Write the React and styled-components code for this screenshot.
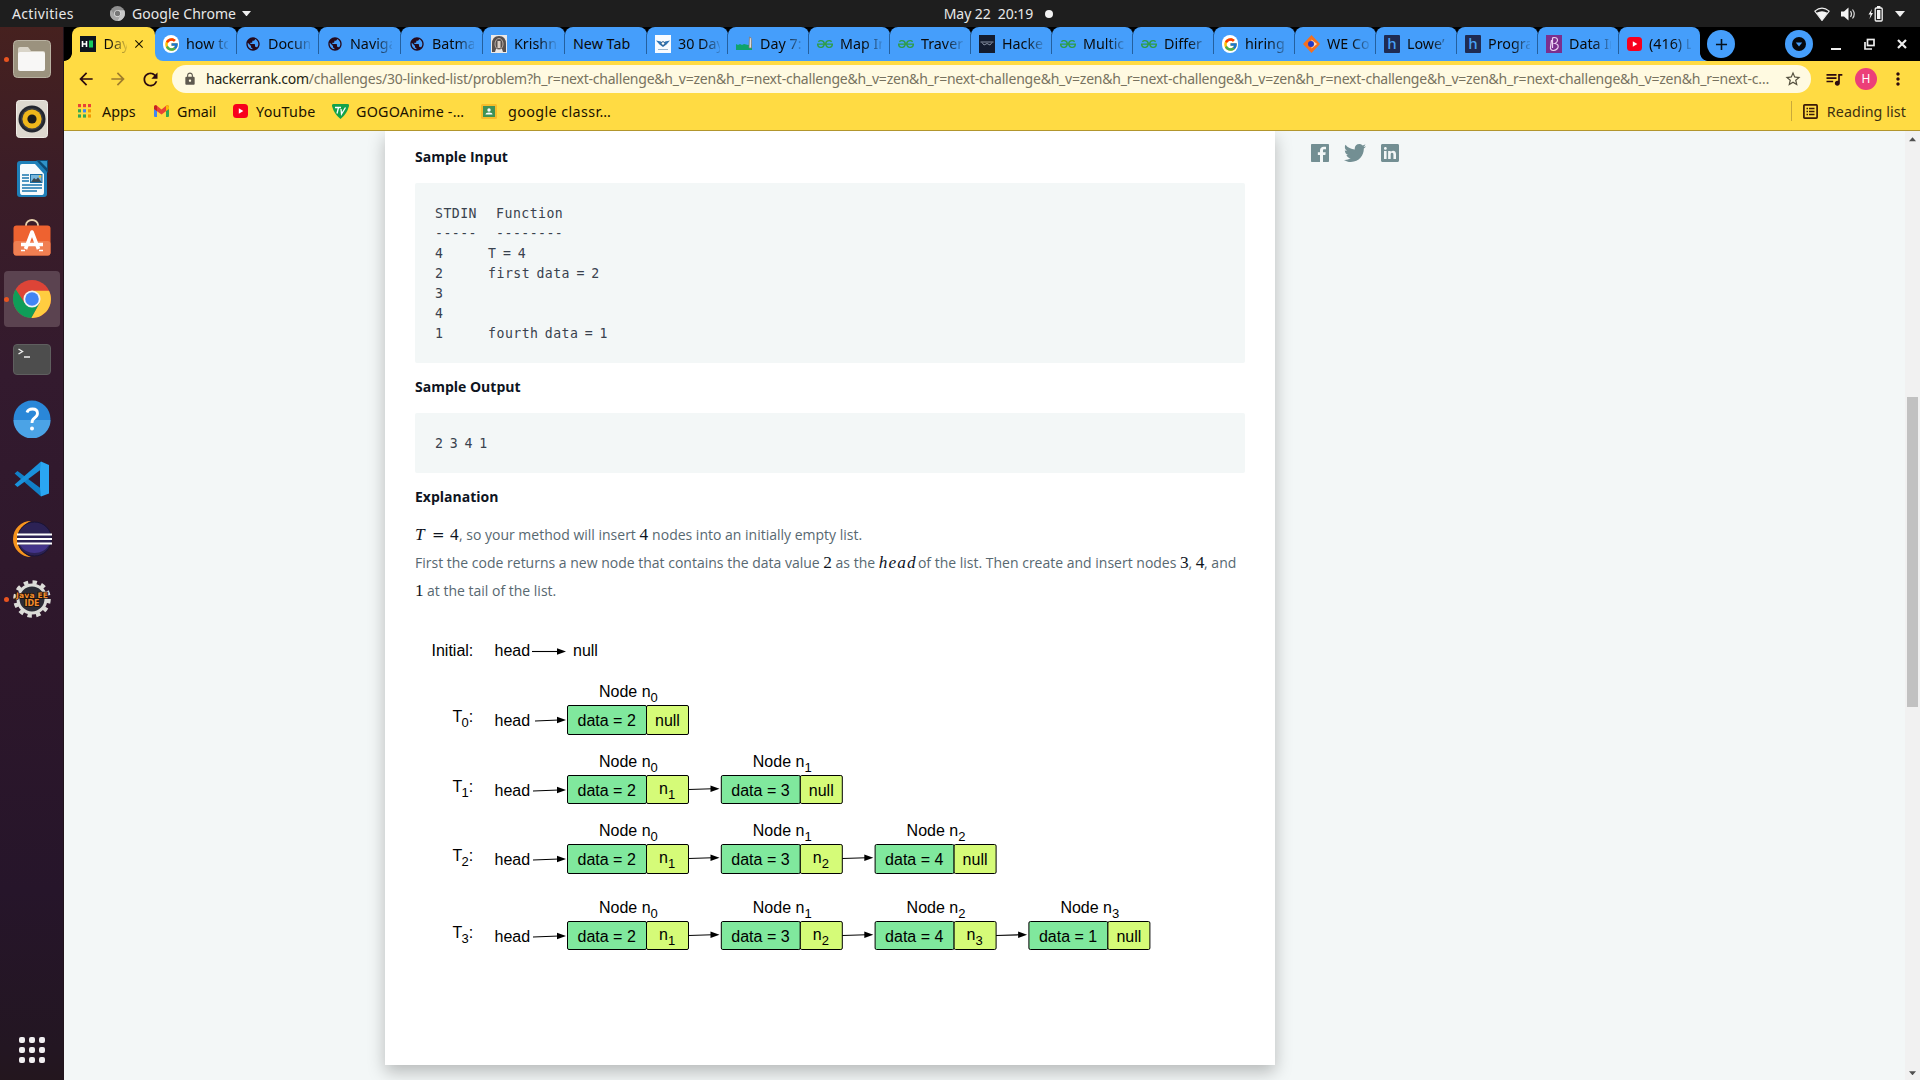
import React from "react";
import styled, { createGlobalStyle } from "styled-components";
import { FcGoogle } from "react-icons/fc";
import { SiGeeksforgeeks } from "react-icons/si";
import { IoLogoFacebook, IoLogoTwitter, IoLogoLinkedin } from "react-icons/io";
import {
  MdPublic, MdLock, MdArrowBack, MdArrowForward, MdRefresh, MdStarBorder,
  MdQueueMusic, MdMoreVert, MdClose, MdAdd,
} from "react-icons/md";

const ui = `"Noto Sans", "Open Sans", sans-serif`;

const Global = createGlobalStyle`
  * { box-sizing: border-box; }
  body { margin: 0; background: #f3f7f7; overflow: hidden; font-family: ${ui}; }
  svg { display: block; flex: none; }
`;

const Screen = styled.div`
  width: 1920px; height: 1080px; display: flex; flex-direction: column; overflow: hidden;
`;

/* ---------- desktop top bar ---------- */
const TopBar = styled.header`
  height: 27px; flex: none; background: #1e1e1e; color: #e8e8e8;
  display: grid; grid-template-columns: 1fr auto 1fr; align-items: center;
  font-size: 14px;
`;
const TopLeft = styled.div`display: flex; align-items: center; padding-left: 12px;`;
const Activities = styled.span`width: 98px; letter-spacing: 0.35px;`;
const AppName = styled.span`margin-left: 7px; margin-right: 6px; letter-spacing: 0.05px;`;
const Clock = styled.div`
  display: flex; align-items: center; gap: 12px; padding-left: 77px; white-space: pre; letter-spacing: -0.07px;
`;
const Dot = styled.i`width: 8px; height: 8px; border-radius: 50%; background: #f2f2f2;`;
const TopRight = styled.div`display: flex; justify-content: flex-end; align-items: center; gap: 11px; padding-right: 15px;`;

/* ---------- dock ---------- */
const Body = styled.div`flex: 1; display: flex; min-height: 0;`;
const Dock = styled.nav`
  width: 64px; flex: none; padding-top: 2px; display: flex; flex-direction: column;
  background: linear-gradient(#46211f 0%, #3b1d27 14%, #331a2e 33%, #2d172b 60%, #26152a 82%, #231622 97%, #23161e 100%);
  border-right: 1px solid #21141c;
`;
const DockItem = styled.div`
  height: 60px; display: grid; grid-template-columns: 4px 56px 3px; align-items: center;
`;
const Running = styled.i`
  width: 5px; height: 5px; margin-left: 4px; border-radius: 50%; z-index: 1;
  background: ${(p) => (p.$on ? "#e95420" : "transparent")};
`;
const Tile = styled.div`
  width: 56px; height: 56px; border-radius: 4px; display: flex; align-items: center; justify-content: center;
  background: ${(p) => (p.$active ? "#5b4350" : "transparent")};
`;
const DockSpacer = styled.div`flex: 1;`;
const AppGrid = styled.div`
  display: grid; grid-template-columns: repeat(3, 6px); gap: 4px; padding: 0 0 17px 19px;
`;
const GridDot = styled.i`height: 6px; border-radius: 2px; background: #f0eef0;`;

/* ---------- browser chrome ---------- */
const Browser = styled.main`flex: 1; display: flex; flex-direction: column; min-width: 0;`;
const TabStrip = styled.div`height: 34px; background: #000; display: flex; flex: none; color: #0a0a0a;`;
const Flare = styled.i`
  width: 8px; align-self: flex-end; height: 8px; flex: none;
  background: radial-gradient(circle at ${(p) => (p.$right ? "100%" : "0")} 0, transparent 7.5px, ${(p) => p.$color} 8.2px);
`;
const ActiveTab = styled.div`
  width: 83px; height: 34px; background: #ffdb43; border-radius: 8px 8px 0 0; flex: none;
  display: flex; align-items: center; padding-left: 8px; font-size: 14.3px;
`;
const ActiveClose = styled.span`display: flex; margin-left: 5px;`;
const TabGroup = styled.div`
  width: 1545px; display: flex; flex: none;
  background: linear-gradient(#ffdb43, #ffdb43) 0 100% / 8px 8px no-repeat;
`;
const Tab = styled.div`
  width: ${(p) => p.$w}px; flex: none; background: #459efb; border-radius: 8px 8px ${(p) => (p.$first ? "0 8px" : "0 0")};
  display: flex; align-items: center; padding-left: 8px; font-size: 14.3px;
`;
const TabSeparator = styled.i`
  width: 1px; height: 20px; margin-left: auto; background: ${(p) => (p.$hide ? "transparent" : "#24609f")};
`;
const TabLabel = styled.span`
  width: ${(p) => p.$w}px; margin-left: ${(p) => p.$gap ?? 7}px; overflow: hidden; white-space: nowrap; line-height: 20px;
  mask-image: ${(p) => (p.$solid ? "none" : "linear-gradient(90deg, #000 calc(100% - 18px), rgba(0,0,0,.12))")};
`;
const RoundButton = styled.div`
  width: 28px; height: 28px; border-radius: 50%; background: #459efb; margin-top: 3px; margin-left: ${(p) => p.$ml}px;
  display: flex; align-items: center; justify-content: center; flex: none;
`;
const WindowButtons = styled.div`
  display: flex; align-items: center; margin-left: 18px; height: 34px; gap: 21.5px;
`;

const Toolbar = styled.div`
  height: 36px; flex: none; background: #ffdb43; display: flex; align-items: center; color: #2b0a10; padding-left: 12px;
`;
const NavIcon = styled.span`width: 32px; flex: none; display: flex; opacity: ${(p) => (p.$dim ? 0.45 : 1)};`;
const Omnibox = styled.div`
  width: 1639px; height: 28px; border-radius: 14px; background: #fffae1; flex: none; margin-right: 13px;
  display: flex; align-items: center; padding: 0 9px 0 11px; color: #77725f;
`;
const Url = styled.div`
  margin-left: 9px; flex: 1; white-space: nowrap; font-size: 14px; letter-spacing: -0.217px; line-height: 22px;
  b { font-weight: 400; color: #241f14; }
`;
const Avatar = styled.div`
  width: 22px; height: 22px; border-radius: 50%; background: #ec3f78; color: #fff; font: 12px/22px ${ui};
  text-align: center; margin: 0 11px; flex: none;
`;
const Bookmarks = styled.div`
  height: 34px; flex: none; background: #ffdb43; border-bottom: 1px solid #b2962d; color: #1b1200;
  display: flex; align-items: center; padding: 0 14px 5px; font-size: 14.3px;
`;
const Bookmark = styled.div`
  display: flex; align-items: center; width: ${(p) => p.$w}px; gap: ${(p) => p.$gap}px; white-space: nowrap;
  letter-spacing: ${(p) => p.$ls || 0}px;
`;
const ReadingList = styled.div`
  margin-left: auto; display: flex; align-items: center; gap: 9px; border-left: 1px solid #c9a93a;
  padding-left: 11px; height: 20px; white-space: nowrap; letter-spacing: 0.08px; color: #3c2f10;
`;

/* ---------- page ---------- */
const Viewport = styled.div`flex: 1; display: flex; min-height: 0; overflow: hidden; background: #f3f7f7;`;
const PageArea = styled.div`flex: 1; display: flex; padding-left: 321px; overflow: hidden;`;
const Card = styled.article`
  width: 890px; height: 934px; background: #fff; padding: 14px 30px 0; flex: none;
  box-shadow: 0 7px 16px rgba(0, 0, 0, 0.25);
  font-family: "Open Sans", sans-serif; color: #576871; font-size: 14px;
`;
const Heading = styled.h3`
  margin: 0; font-size: 14px; font-weight: 700; line-height: 24px; color: #0e141e;
`;
const Code = styled.pre`
  margin: 14px 0 12px; padding: 21px 20px 19px; background: #f3f7f7; border-radius: 2px; color: #39424e;
  font: 13.2px/20px "DejaVu Sans Mono", monospace; letter-spacing: 0.45px; word-spacing: -2px;
`;
const Text = styled.p`margin: 12px 0 0; line-height: 28px; white-space: nowrap;`;
const M = styled.span`
  display: inline-block; width: ${(p) => p.$w}px; line-height: 20px; color: #0e141e; white-space: pre;
  font-family: ${(p) => (p.$op ? '"DejaVu Serif"' : '"Liberation Serif"')}, serif; font-size: ${(p) => (p.$op ? 15 : 17.3)}px;
  font-style: ${(p) => (p.$i ? "italic" : "normal")}; letter-spacing: ${(p) => p.$ls || 0}px;
`;
const Diagram = styled.svg`margin-top: 25px;`;
const Share = styled.aside`display: flex; gap: 11px; padding: 10px 0 0 33px; color: #738f93;`;
const Scrollbar = styled.div`
  width: 15px; background: #f1f1f1; display: flex; flex-direction: column; align-items: center; padding: 6px 0 5px;
`;
const Thumb = styled.div`width: 11px; height: 310px; background: #c1c1c1; margin-top: 255px; margin-bottom: auto;`;

/* ---------- drawings ---------- */
const Chrome = ({ s = 38, mono }) => {
  const c = mono ? ["#8f8f8f", "#a8a8a8", "#c9c9c9", "#777", "#e6e6e6"] : ["#dd4437", "#0f9d58", "#ffcd40", "#4285f4", "#f4f4f4"];
  return (
    <svg width={s} height={s} viewBox="0 0 48 48">
      <circle cx="24" cy="24" r="24" fill={c[0]} />
      <path d="M24 13.5H45.5A24 24 0 0 1 23 48L33.5 29Z" fill={c[2]} />
      <path d="M3.4 11.6A24 24 0 0 0 23 48L33.4 29.4 14.7 29Z" fill={c[1]} />
      <circle cx="24" cy="24" r="10.8" fill={c[4]} />
      <circle cx="24" cy="24" r="8.6" fill={c[3]} />
    </svg>
  );
};
const Files = () => (
  <svg width="38" height="38" viewBox="0 0 38 38">
    <rect x=".5" y=".5" width="37" height="37" rx="4" fill="#9b927e" stroke="#b9b2a2" />
    <path d="M5 9a2 2 0 0 1 2-2h8l3 4h12a2 2 0 0 1 2 2v5H5Z" fill="#d9d4c8" />
    <rect x="5" y="12" width="27" height="19" rx="2" fill="#f8f7f6" />
  </svg>
);
const Rhythm = () => (
  <svg width="32" height="38" viewBox="0 0 32 38">
    <rect x=".5" y=".5" width="31" height="37" rx="3" fill="#ddd8cf" stroke="#efece6" />
    <circle cx="16" cy="19" r="13.5" fill="#23262f" />
    <circle cx="16" cy="19" r="11" fill="#3a3c42" />
    <circle cx="16" cy="19" r="9.6" fill="#f0b71b" />
    <circle cx="16" cy="19" r="4.6" fill="#1c1c1c" />
  </svg>
);
const Writer = () => (
  <svg width="32" height="38" viewBox="0 0 32 38">
    <rect x="1" y="1" width="30" height="36" rx="3" fill="#1e7fb8" />
    <path d="M4 6q0-2 2-2h13l9 10v18q0 3-2 3H6q-2 0-2-3Z" fill="#f7fafc" />
    <path d="M20 0h12v13Z" fill="#0d4a73" /><path d="M24 1h7v7Z" fill="#2f93c9" />
    <path d="M6 15h7M6 18h7M6 21h7M6 25h20M6 28h20M6 31h15" stroke="#1a75ad" strokeWidth="1.4" />
    <rect x="14.5" y="14.5" width="11.5" height="8" fill="#79b7dd" stroke="#1a6da3" />
    <path d="M15 22l3-4 2 1.5 2-2 3.5 4.5Z" fill="#3c4a52" /><circle cx="24" cy="16.5" r="1.2" fill="#f5c12e" />
  </svg>
);
const Software = () => (
  <svg width="38" height="40" viewBox="0 0 38 40">
    <path d="M13 8V6a6 5 0 0 1 12 0v2" fill="none" stroke="#e9d3ad" strokeWidth="1.8" />
    <rect x=".5" y="6.5" width="37" height="30" rx="3" fill="#ee6230" />
    <rect x=".5" y="22" width="37" height="14.5" rx="3" fill="#f07f52" />
    <path d="M12.5 30L19 13l6.5 17M8 25.5h22" fill="none" stroke="#fff" strokeWidth="3.6" strokeLinejoin="round" />
    <path d="M8 31.5h4M26 31.5h4" stroke="#fff" strokeWidth="1.4" />
  </svg>
);
const Terminal = () => (
  <svg width="38" height="31" viewBox="0 0 38 31">
    <rect x=".5" y=".5" width="37" height="30" rx="3.5" fill="#4d4d4d" stroke="#5f5f5f" />
    <path d="M5.5 5l4 2.500-4 2.500M11 13h6" fill="none" stroke="#eee" strokeWidth="1.4" />
  </svg>
);
const Help = () => (
  <svg width="38" height="38" viewBox="0 0 38 38">
    <circle cx="19" cy="19" r="18.5" fill="#2a87d8" />
    <path d="M.5 20h37a18.500 18.500 0 0 1-37 0Z" fill="#4ba3e6" />
    <path d="M14 12.500q1-3.500 5.500-3.500 5 0 5 4.300 0 2.700-3 4.700-2.500 1.700-2.500 5" fill="none" stroke="#fff" strokeWidth="2.8" />
    <circle cx="19" cy="28.5" r="2" fill="#fff" />
  </svg>
);
const VSCode = () => (
  <svg width="36" height="36" viewBox="0 0 36 36">
    <path d="M.6 12.500L3.500 10 27 27.500V35.500Z" fill="#1180c8" />
    <path d="M.6 23.500L3.500 26 27 8.500V.5Z" fill="#1a92dc" />
    <path d="M26 9v18l1 8.500 8-3V4L27 .5Z" fill="#2aa6f2" />
  </svg>
);
const Eclipse = () => (
  <svg width="42" height="38" viewBox="0 0 42 38">
    <path d="M20 1A18 18 0 0 0 20 37Q6 31 7 19 7 7 20 1Z" fill="#f7941e" />
    <circle cx="23.5" cy="19" r="17" fill="#2c2255" stroke="#191436" />
    <path d="M9 25h29q-5 8-14.500 8T9 25Z" fill="#43348a" />
    <path d="M6 14.500h35M6 19h35M6 23.500h35" stroke="#fff" strokeWidth="2.2" />
  </svg>
);
const JavaEE = () => (
  <svg width="40" height="40" viewBox="0 0 40 40">
    <circle cx="20" cy="20" r="16.8" fill="none" stroke="#dcdcd8" strokeWidth="4" strokeDasharray="4.4 4.4" />
    <circle cx="20" cy="20" r="14" fill="#2b2b35" stroke="#dcdcd8" strokeWidth="3" />
    <g fill="#f08b2c" stroke="#1c120c" strokeWidth="1.6" paintOrder="stroke" fontFamily="DejaVu Sans" fontWeight="700" textAnchor="middle">
      <text x="20" y="18.5" fontSize="7.6" textLength="32">Java EE</text>
      <text x="20" y="27" fontSize="8">IDE</text>
    </g>
  </svg>
);
const HrIcon = () => (
  <svg width="16" height="16" viewBox="0 0 16 16">
    <rect width="16" height="16" fill="#0e141e" />
    <path d="M2.500 5v6M6.500 5v6M2.500 8h4" stroke="#fff" strokeWidth="1.6" fill="none" /><rect x="9" y="4.5" width="4" height="7" fill="#1bc95c" />
  </svg>
);
const GIcon = styled.span`
  width: 16px; height: 18px; border-radius: 8px; background: #fff; display: flex; align-items: center; justify-content: center; flex: none;
`;
const G = () => <GIcon><FcGoogle size={15} /></GIcon>;
const Globe = () => <MdPublic size={16} color="#250a1c" />;
const Gfg = () => <SiGeeksforgeeks size={16} color="#2f9d46" />;
const Temple = () => (
  <svg width="16" height="18" viewBox="0 0 16 18">
    <rect width="16" height="18" fill="#ece9e6" />
    <path d="M1 17V9q0-8 7-8t7 8v8h-3l-1-3H5l-1 3Z" fill="#57504e" />
    <ellipse cx="8" cy="9" rx="4" ry="5.5" fill="none" stroke="#b8aca4" /><rect x="6.5" y="6" width="3" height="7" fill="#d8cdc4" />
  </svg>
);
const Wings = () => (
  <svg width="16" height="18" viewBox="0 0 16 18">
    <rect width="16" height="18" fill="#f8fbff" /><path d="M1 5.500l5 1 1 3h2l1-3 5-1-3.500 4L8 12 4.500 9.500Z" fill="#2f74b5" />
    <circle cx="8" cy="8.5" r="1.8" fill="#fff" stroke="#2b5d8c" /><path d="M3 14.500h10" stroke="#9ab6cf" />
  </svg>
);
const Train = () => (
  <svg width="17" height="16" viewBox="0 0 17 16">
    <path d="M0 8l2 1 2-1 2 1 2-1 4 1 4-1v6H0Z" fill="#0fa36b" /><path d="M13.500 1q2 0 2 3v8h-2.500Z" fill="#e4dcd6" stroke="#7c7471" strokeWidth=".7" />
  </svg>
);
const Dark = () => (
  <svg width="16" height="18" viewBox="0 0 16 18">
    <rect width="16" height="18" fill="#141c2e" /><path d="M1.500 7h13M3 7.500l2 2.500 3-1.500L11 10l2-2.500" stroke="#8790a2" strokeWidth="1" fill="none" />
  </svg>
);
const Diamond = () => (
  <svg width="17" height="18" viewBox="0 0 17 18">
    <path d="M8.500 0L17 9l-8.500 9L0 9Z" fill="#f4701f" /><path d="M8.500 4.500L14 9l-5.500 4.500Z" fill="#ffd9b8" /><circle cx="8" cy="9" r="3" fill="#2338c8" />
  </svg>
);
const Letter = styled.span`
  width: 16px; height: 18px; flex: none; background: ${(p) => p.$bg}; color: ${(p) => p.$fg}; font: ${(p) => p.$font};
  text-align: center; border-radius: 1px;
`;
const H = () => <Letter $bg="#1f2b52" $fg="#49a2f5" $font='500 15px/17px "Noto Sans", sans-serif'>h</Letter>;
const BetaIcon = () => (
  <svg width="16" height="18" viewBox="0 0 16 18">
    <rect width="16" height="18" fill="#7b2f8e" />
    <path d="M6.500 13V3.500Q6.500 2.500 8 2.500q3.500 0 3.500 2.800Q11.500 7.500 9 8.500q4 .8 3 4Q11 15 7.500 15.500 4 15.500 4.500 12L5.500 5" stroke="#ecd3f3" strokeWidth="1.2" fill="none" />
  </svg>
);
const Yt = () => (
  <svg width="15" height="14" viewBox="0 0 15 14">
    <rect width="15" height="14" rx="3.5" fill="#f8001c" /><path d="M5.800 4.200v5.600L10.300 7Z" fill="#fff" />
  </svg>
);
const Gmail = () => (
  <svg width="15" height="12" viewBox="0 0 15 12">
    <path d="M0 1.500h3V12H1q-1 0-1-1Z" fill="#4285f4" /><path d="M12 1.500h3V11q0 1-1 1h-2Z" fill="#34a853" />
    <path d="M0 1.500Q1-.5 3 .8L7.500 4.400 12 .8Q14-.5 15 1.500V4L7.500 9.500 0 4Z" fill="#ea4335" />
    <path d="M12 .8q2-1.200 3 .7V4l-3 2Z" fill="#fbbc04" /><path d="M0 1.500Q1-.5 3 .8V6L0 4Z" fill="#c5221f" />
  </svg>
);
const Apps = () => {
  const c = ["#ea4335", "#ea4335", "#ea4335", "#34a853", "#4285f4", "#f29900", "#34a853", "#34a853", "#f29900"];
  return <svg width="13" height="14" viewBox="0 0 13 14">{c.map((f, i) => <rect key={i} x={(i % 3) * 5} y={Math.floor(i / 3) * 5.2} width="3" height="3.2" fill={f} />)}</svg>;
};
const Tv = () => (
  <svg width="17" height="15" viewBox="0 0 17 15">
    <path d="M1.500 0h14q2 0 1.500 2-2 8-8.500 13Q2 10 0 2-.2 0 1.500 0Z" fill="#12a24b" />
    <path d="M3 3.500h6M6.500 3.500L5 9.500M9 5l.5 5L13.500 3.500" stroke="#fff" strokeWidth="1.3" fill="none" />
  </svg>
);
const Classroom = () => (
  <svg width="16" height="15" viewBox="0 0 16 15">
    <rect width="16" height="15" rx="1.5" fill="#f6bd2b" /><rect x="2" y="2" width="12" height="11" fill="#3f9256" />
    <circle cx="8" cy="6" r="1.7" fill="#fff" /><path d="M4.500 10.500q0-2 3.500-2t3.500 2Z" fill="#fff" />
  </svg>
);
const ListIcon = () => (
  <svg width="15" height="15" viewBox="0 0 15 15" stroke="#3b1a08" fill="none">
    <rect x=".9" y=".9" width="13.2" height="13.2" rx=".8" strokeWidth="1.7" />
    <path d="M3.500 4.500H5M6 4.500h5.500M3.500 7.500H5M6 7.500h5.500M3.500 10.500H5M6 10.500h5.500" strokeWidth="1.5" />
  </svg>
);
const Wifi = () => (
  <svg width="16" height="14" viewBox="0 0 16 14">
    <path d="M.8 4.200Q8-2 15.200 4.200L8 13.500Z" fill="none" stroke="#eee" strokeWidth="1.1" /><path d="M2.500 5.800Q8 2.500 13.500 5.800L8 13.500Z" fill="#f4f4f4" />
  </svg>
);
const Volume = () => (
  <svg width="16" height="14" viewBox="0 0 16 14">
    <path d="M0 4.500h3L7.500.5v13L3 9.500H0Z" fill="#f4f4f4" />
    <path d="M9.500 4q2 3 0 6M11.500 2.500q3.500 4.500 0 9" fill="none" stroke="#d8d8d8" strokeWidth="1.2" />
  </svg>
);
const Battery = () => (
  <svg width="16" height="16" viewBox="0 0 16 16">
    <path d="M4 3L.5 8.500H2.500L1.500 13 5 7H3Z" fill="#f4f4f4" /><rect x="7.2" y="2" width="7" height="13" rx="1" fill="none" stroke="#f4f4f4" strokeWidth="1.3" />
    <rect x="9" y="4" width="3.4" height="9" fill="#f4f4f4" /><rect x="9" y="0" width="3.4" height="2" fill="#f4f4f4" />
  </svg>
);
const Caret = ({ c = "#eee", w = 10, up }) => (
  <svg width={w} height={w / 2 + 1} viewBox="0 0 10 6"><path d={up ? "M0 6h10L5 0Z" : "M0 0h10L5 6Z"} fill={c} /></svg>
);

/* ---------- linked list diagram ---------- */
const Sub = ({ x, y, t, s }) => (
  <text x={x} y={y}>{t}<tspan dy="5" fontSize="13">{s}</tspan></text>
);
const Arrow = ({ x1, y1, x2, y2 }) => (
  <g>
    <path d={`M${x1} ${y1}L${x2 - 7} ${y2}`} stroke="#000" strokeWidth="1.1" />
    <path d={`M${x2} ${y2}l-9-3.300v6.600Z`} />
  </g>
);
const rows = [
  { top: 75.5, h: 29, next: [null] },
  { top: 145.5, h: 28, next: [1, null] },
  { top: 214.5, h: 29, next: [1, 2, null] },
  { top: 291.5, h: 28, next: [1, 2, 3, null] },
];
const values = [2, 3, 4, 1];
const ListDiagram = () => (
  <Diagram width="760" height="330" viewBox="0 0 760 330" fontFamily='"Liberation Sans", Arial, sans-serif' fontSize="16">
    <text x="16.5" y="26">Initial:</text>
    <text x="79.5" y="26">head</text>
    <Arrow x1="117" y1="21.5" x2="151" y2="21.5" />
    <text x="158" y="26">null</text>
    {rows.map((r, i) => (
      <g key={i}>
        <text x="37.5" y={r.top + 16}>T<tspan dy="5" dx="-0.7" fontSize="13">{i}</tspan><tspan dy="-5">:</tspan></text>
        <text x="79.5" y={r.top + 20.5}>head</text>
        <Arrow x1={i ? 118 : 120} y1={r.top + 15.5} x2="151" y2={r.top + 14.5} />
        {r.next.map((n, j) => {
          const x = 152.5 + j * 153.8;
          return (
            <g key={j}>
              <Sub x={x + 31.5} y={r.top - 9} t="Node n" s={j} />
              <rect x={x} y={r.top} width="79" height={r.h} rx="1.5" fill="#80e89d" stroke="#000" />
              <rect x={x + 79} y={r.top} width="42" height={r.h} rx="1.5" fill="#d5fb78" stroke="#000" />
              <text x={x + 10} y={r.top + 20.5}>data = {values[j]}</text>
              {n == null ? <text x={x + 87.5} y={r.top + 20.5}>null</text> : <Sub x={x + 91.5} y={r.top + 18} t="n" s={n} />}
              {n != null && <Arrow x1={x + 121} y1={r.top + 14} x2={x + 152} y2={r.top + 13.3} />}
            </g>
          );
        })}
      </g>
    ))}
  </Diagram>
);

const tabs = [
  [G, "how to"], [Globe, "Docum"], [Globe, "Naviga"], [Globe, "Batma"], [Temple, "Krishn"], [null, "New Tab"],
  [Wings, "30 Day"], [Train, "Day 7:"], [Gfg, "Map In"], [Gfg, "Traver"], [Dark, "Hacke"], [Gfg, "Multic"],
  [Gfg, "Differ"], [G, "hiring"], [Diamond, "WE Co"], [H, "Lowe’"], [H, "Progra"], [BetaIcon, "Data In"], [Yt, "(416) L"],
];
const dock = [
  [Files, true], [Rhythm], [Writer], [Software], [Chrome, true, true], [Terminal], [Help], [VSCode], [Eclipse], [JavaEE, true],
];
const query = "h_r=next-challenge&h_v=zen&".repeat(6) + "h_r=next-c…";
const code = `STDIN   Function
-----   --------
4       T = 4
2       first data = 2
3
4
1       fourth data = 1`;

export default function App() {
  return (
    <Screen>
      <Global />
      <TopBar>
        <TopLeft>
          <Activities>Activities</Activities>
          <Chrome s={15} mono />
          <AppName>Google Chrome</AppName>
          <Caret w={9} />
        </TopLeft>
        <Clock>May 22  20:19<Dot /></Clock>
        <TopRight><Wifi /><Volume /><Battery /><Caret /></TopRight>
      </TopBar>
      <Body>
        <Dock>
          {dock.map(([Icon, on, active], i) => (
            <DockItem key={i}><Running $on={on} /><Tile $active={active}><Icon /></Tile></DockItem>
          ))}
          <DockSpacer />
          <AppGrid>{Array.from({ length: 9 }, (_, i) => <GridDot key={i} />)}</AppGrid>
        </Dock>
        <Browser>
          <TabStrip>
            <Flare $color="#ffdb43" />
            <ActiveTab>
              <HrIcon />
              <TabLabel $w={23} $gap={7.5}>Day</TabLabel>
              <ActiveClose><MdClose size={14} color="#1d1600" /></ActiveClose>
            </ActiveTab>
            <TabGroup>
              {tabs.map(([Icon, label], i) => (
                <Tab key={i} $first={i === 0} $w={i < 6 ? 82 : 81}>
                  {Icon && <Icon />}
                  <TabLabel $w={Icon ? 42 : 62} $gap={Icon ? 7 : 0} $solid={!Icon}>{label}</TabLabel>
                  <TabSeparator $hide={i === tabs.length - 1} />
                </Tab>
              ))}
            </TabGroup>
            <Flare $color="#459efb" $right />
            <RoundButton $ml={-1}><MdAdd size={19} color="#06131f" /></RoundButton>
            <RoundButton $ml={50}>
              <svg width="14" height="14" viewBox="0 0 14 14"><circle cx="7" cy="7" r="7" fill="#05080c" /><path d="M3.800 5.500h6.400L7 9.500Z" fill="#459efb" /></svg>
            </RoundButton>
            <WindowButtons>
              <svg width="11" height="12"><rect y="10" width="10" height="2.2" fill="#eee" /></svg>
              <svg width="11" height="12" viewBox="0 0 11 12" fill="none" stroke="#eee" strokeWidth="1.7"><rect x="3.5" y="1.5" width="6.5" height="6" /><path d="M1 4v7h7" /></svg>
              <svg width="12" height="12" viewBox="0 0 12 12" stroke="#eee" strokeWidth="2.2"><path d="M2 2l8 8M10 2l-8 8" /></svg>
            </WindowButtons>
          </TabStrip>
          <Toolbar>
            <NavIcon><MdArrowBack size={20} /></NavIcon>
            <NavIcon $dim><MdArrowForward size={20} /></NavIcon>
            <NavIcon><MdRefresh size={21} /></NavIcon>
            <Omnibox>
              <MdLock size={14} color="#5f5a50" />
              <Url><b>hackerrank.com</b>/challenges/30-linked-list/problem?{query}</Url>
              <MdStarBorder size={18} color="#55503f" />
            </Omnibox>
            <MdQueueMusic size={20} />
            <Avatar>H</Avatar>
            <MdMoreVert size={20} />
          </Toolbar>
          <Bookmarks>
            <Bookmark $w={76} $gap={11}><Apps />Apps</Bookmark>
            <Bookmark $w={79} $gap={8}><Gmail />Gmail</Bookmark>
            <Bookmark $w={99} $gap={8} $ls={0.25}><Yt />YouTube</Bookmark>
            <Bookmark $w={149} $gap={7} $ls={0.22}><Tv />GOGOAnime -…</Bookmark>
            <Bookmark $w={150} $gap={11} $ls={0.4}><Classroom />google classr…</Bookmark>
            <ReadingList><ListIcon />Reading list</ReadingList>
          </Bookmarks>
          <Viewport>
            <PageArea>
              <Card>
                <Heading>Sample Input</Heading>
                <Code>{code}</Code>
                <Heading>Sample Output</Heading>
                <Code>2 3 4 1</Code>
                <Heading>Explanation</Heading>
                <Text>
                  <M $w={17} $i>T</M><M $w={18} $op>=</M><M $w={9}>4</M>, so your method will insert <M $w={9}>4</M> nodes into an initially empty list.<br />
                  First the code returns a new node that contains the data value <M $w={8.6}>2</M> as the <M $w={35.5} $i $ls={1.1}>head</M> of the list. Then create and insert nodes <M $w={8.4}>3</M>, <M $w={8.4}>4</M>, and<br />
                  <M $w={8.4} $ls={-1}>1</M> at the tail of the list.
                </Text>
                <ListDiagram />
              </Card>
              <Share><IoLogoFacebook size={24} /><IoLogoTwitter size={24} /><IoLogoLinkedin size={24} /></Share>
            </PageArea>
            <Scrollbar><Caret w={7} c="#505050" up /><Thumb /><Caret w={7} c="#505050" /></Scrollbar>
          </Viewport>
        </Browser>
      </Body>
    </Screen>
  );
}
